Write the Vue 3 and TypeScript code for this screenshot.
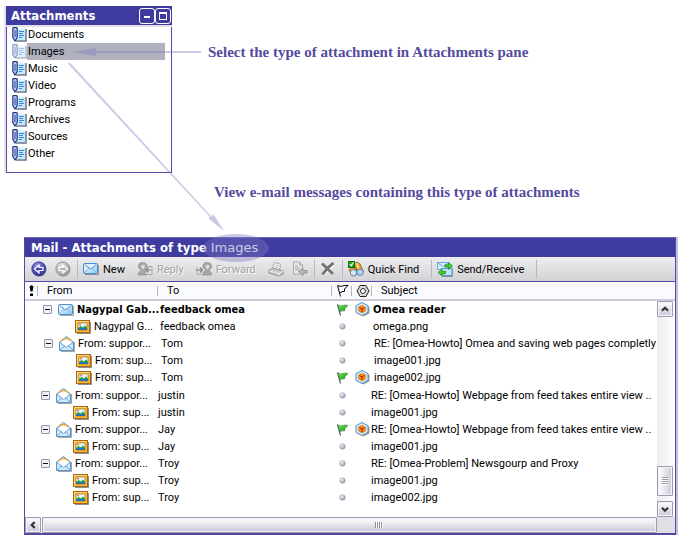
<script setup lang="ts">
import { ref } from 'vue'

interface Row {
  from: string
  to: string
  subject: string
  child?: boolean
  unread?: boolean
  flagged?: boolean
}
interface Thread {
  level: 'near' | 'mid' | 'far'
  rows: Row[]
}

const types = ['Documents', 'Images', 'Music', 'Video', 'Programs', 'Archives', 'Sources', 'Other']
const selected = ref('Images')

const threads: Thread[] = [
  {
    level: 'mid',
    rows: [
      { from: 'Nagypal Gab...', to: 'feedback omea', subject: 'Omea reader', unread: true, flagged: true },
      { from: 'Nagypal G...', to: 'feedback omea', subject: 'omega.png', child: true },
    ],
  },
  {
    level: 'far',
    rows: [
      { from: 'From: suppor...', to: 'Tom', subject: 'RE: [Omea-Howto] Omea and saving web pages completly' },
      { from: 'From: sup...', to: 'Tom', subject: 'image001.jpg', child: true },
      { from: 'From: sup...', to: 'Tom', subject: 'image002.jpg', child: true, flagged: true },
    ],
  },
  {
    level: 'near',
    rows: [
      { from: 'From: suppor...', to: 'justin', subject: 'RE: [Omea-Howto] Webpage from feed takes entire view ..' },
      { from: 'From: sup...', to: 'justin', subject: 'image001.jpg', child: true },
    ],
  },
  {
    level: 'near',
    rows: [
      { from: 'From: suppor...', to: 'Jay', subject: 'RE: [Omea-Howto] Webpage from feed takes entire view ..', flagged: true },
      { from: 'From: sup...', to: 'Jay', subject: 'image001.jpg', child: true },
    ],
  },
  {
    level: 'near',
    rows: [
      { from: 'From: suppor...', to: 'Troy', subject: 'RE: [Omea-Problem] Newsgourp and Proxy' },
      { from: 'From: sup...', to: 'Troy', subject: 'image001.jpg', child: true },
      { from: 'From: sup...', to: 'Troy', subject: 'image002.jpg', child: true },
    ],
  },
]
</script>

<template>
  <main class="page">
    <svg class="sprite" aria-hidden="true">
      <defs>
        <linearGradient id="gBlue" x1="0" y1="0" x2="1" y2="1">
          <stop offset="0" stop-color="#ffffff" /><stop offset="1" stop-color="#8cc8f2" />
        </linearGradient>
        <radialGradient id="gNav" cx="0.4" cy="0.3" r="0.8">
          <stop offset="0" stop-color="#a3a0e8" /><stop offset="0.6" stop-color="#4a45b4" /><stop offset="1" stop-color="#2b2683" />
        </radialGradient>
        <radialGradient id="gNavOff" cx="0.4" cy="0.3" r="0.8">
          <stop offset="0" stop-color="#e4e4e4" /><stop offset="0.6" stop-color="#b4b4b4" /><stop offset="1" stop-color="#8c8c8c" />
        </radialGradient>
        <radialGradient id="gDot" cx="0.35" cy="0.3" r="0.8">
          <stop offset="0" stop-color="#f2f2f8" /><stop offset="1" stop-color="#8d8da4" />
        </radialGradient>
        <linearGradient id="gFlag" x1="0" y1="0" x2="1" y2="1">
          <stop offset="0" stop-color="#7dea5c" /><stop offset="1" stop-color="#0c8a12" />
        </linearGradient>
      </defs>
      <symbol id="doc" viewBox="0 0 15 15">
        <path d="M4 14h10V2" fill="none" stroke="#66758c" stroke-width="1.500" />
        <rect x="3" y="1" width="10" height="12" fill="#c6e6fb" />
        <path d="M3 1h10v2H3z" fill="#e6f5ff" />
        <path d="M7 4.500h5M7 6.500h4M7 8.500h5M7 10.500h3" stroke="#2f8bdc" />
        <path d="M.8 1v9.500L3 14l2.200-3.500V1Q3-.3.8 1z" fill="#b9c9f2" stroke="#1d2f7e" stroke-width="1.100" />
        <path d="M3 3v7" stroke="#33489c" />
      </symbol>
      <symbol id="mail" viewBox="0 0 16 14">
        <path d="M2 12.500h13.500V3" fill="none" stroke="#000" opacity=".35" />
        <rect x=".5" y="1.500" width="14" height="10" rx="1" fill="url(#gBlue)" stroke="#4e8fca" />
        <path d="M1 11l5-4.500M14 11L9 6.500" stroke="#8dbce4" />
        <path d="M1.500 2.500l6 4.500 6-4.500" fill="#e6f5ff" stroke="#4e8fca" />
      </symbol>
      <symbol id="opened" viewBox="0 0 16 16">
        <path d="M2 15.500h13.500V6" fill="none" stroke="#000" opacity=".35" />
        <path d="M.5 6L7.500.5l7 5.500v8.500H.5z" fill="#cfe9fc" stroke="#5b93c8" />
        <path d="M3 8V4.500Q7.500 1 12 4.500V8l-4.500 3z" fill="#fff" />
        <path d="M2.500 5Q7.500 0 12.500 5" fill="none" stroke="#e6a63c" stroke-width="1.500" />
        <path d="M1 6.500l6.500 5 6.500-5M1 14l5-4.500M14 14l-5-4.500" fill="none" stroke="#6ea8da" />
      </symbol>
      <symbol id="picture" viewBox="0 0 16 14">
        <path d="M2 13.500h13.500V2" fill="none" stroke="#333" opacity=".55" />
        <rect x=".5" y=".5" width="14" height="12" fill="#f6b82e" stroke="#a9651a" />
        <path d="M1.500 1.500h12M1.500 1.500v10" stroke="#ffe68a" stroke-dasharray="2 1" />
        <rect x="3" y="3" width="9" height="7" fill="#e4f6ff" stroke="#8a5a20" stroke-width=".5" />
        <path d="M3 8l2.500-2L8 7.500 10 5.500l2 2V9H3z" fill="#22a04a" />
        <path d="M3 8.500h9V10H3z" fill="#2468d0" />
        <circle cx="5" cy="4.500" r="1" fill="#f06030" />
      </symbol>
      <symbol id="flag" viewBox="0 0 13 13">
        <path d="M1.500 1.500l3 11" stroke="#555b66" stroke-width="1.200" />
        <path d="M2 2q3 1.500 5 .5t5 0L9 5.500 8.500 8q-2.500-1-4.500 1z" fill="url(#gFlag)" stroke="#23942a" stroke-width=".6" />
      </symbol>
      <symbol id="flagOutline" viewBox="0 0 13 13">
        <path d="M1.500 1.500l3 11M1.500 1.500q3 1.500 5 .5t5.500-.5L8.500 5v2.500q-2.500-.5-5 1.500" fill="none" stroke="#000" />
      </symbol>
      <symbol id="nut" viewBox="0 0 14 14">
        <path d="M4 1.500h6L13 7l-3 5.500H4L1 7z" fill="#fff" stroke="#222" />
        <circle cx="7" cy="7" r="2.500" fill="none" stroke="#222" />
        <circle cx="7" cy="7" r="4.300" fill="none" stroke="#888" stroke-width=".7" />
      </symbol>
      <symbol id="attach" viewBox="0 0 15 15">
        <path d="M7.500 1.500l6 3v6.500l-6 3-5-2.500z" fill="#444" opacity=".5" transform="translate(1 .5)" />
        <path d="M7 .5l6 3.200v6.600l-6 3.200-6-3.200V3.700z" fill="#dff1fe" stroke="#3c8fd4" />
        <path d="M7 3l3.800 2v4L7 11.200 3.200 9V5z" fill="#f28a1c" stroke="#f08a30" stroke-width=".6" />
        <path d="M4.500 5.500L7 7v3M7 7l2.500-1.500" fill="none" stroke="#8c2a08" />
      </symbol>
      <symbol id="dot" viewBox="0 0 7 7">
        <circle cx="3.500" cy="3.500" r="2.800" fill="url(#gDot)" stroke="#9797ac" stroke-width=".5" />
      </symbol>
      <symbol id="navBack" viewBox="0 0 16 16">
        <circle cx="8.500" cy="8.700" r="7" fill="#000" opacity=".3" />
        <circle cx="7.800" cy="7.800" r="7" fill="url(#gNav)" stroke="#353090" stroke-width=".8" />
        <path d="M12 6.500H8V4L3.500 8 8 12V9.500h4z" fill="#4d48b6" stroke="#fff" stroke-width="1.200" />
      </symbol>
      <symbol id="navForward" viewBox="0 0 16 16">
        <circle cx="8.500" cy="8.700" r="7" fill="#000" opacity=".2" />
        <circle cx="7.800" cy="7.800" r="7" fill="url(#gNavOff)" stroke="#8b8b8b" stroke-width=".8" />
        <path d="M4 6.500h4V4l4.500 4L8 12V9.500H4z" fill="#b4b4b4" stroke="#fff" stroke-width="1.200" />
      </symbol>
      <symbol id="reply" viewBox="0 0 16 14">
        <path d="M1 13q0-3 3-4V7.500Q1 6.500 1.500 3.500T5.500.5q4 0 4.500 3T8 7.500V9q2 1 2 4z" fill="#a6a6a6" stroke="#8c8c8c" stroke-width=".7" />
        <path d="M4 3.500q2-1.500 4 0L7.500 6 6 7.500 4.500 6z" fill="#dcdcdc" />
        <path d="M9.500 4.500h5.500v8H9" fill="#e4e4e4" stroke="#a6a6a6" />
        <path d="M14 8H9.500M11.500 5.500L9 8l2.500 2.500" fill="none" stroke="#808080" stroke-width="1.200" />
      </symbol>
      <symbol id="forward" viewBox="0 0 16 14">
        <path d="M6.500 13q0-3 3-4V7.500Q6.500 6.500 7 3.500T11 .5q4 0 4.500 3T13.500 7.500V9q2 1 2 4z" fill="#a6a6a6" stroke="#8c8c8c" stroke-width=".7" />
        <path d="M9.500 3.500q2-1.500 4 0L13 6l-1.500 1.500L10 6z" fill="#dcdcdc" />
        <path d="M1 5v7.500h6" fill="none" stroke="#b0b0b0" />
        <path d="M0 8h6M4 5.500L6.500 8 4 10.500" fill="none" stroke="#808080" stroke-width="1.200" />
      </symbol>
      <symbol id="print" viewBox="0 0 16 15">
        <path d="M4.500 7l2-6.200 6 2L11.500 9z" fill="#f4f4f4" stroke="#aaaaaa" />
        <path d="M7.500 3.500l3.500 1M7 5.500l3.500 1" stroke="#b8b8b8" />
        <path d="M.8 9l3.700-2.500 10.700 3v3L11 14.500.8 11.500z" fill="#c6c6c6" stroke="#969696" />
        <path d="M1.500 9.500L11 12l4-2.500M11 12v2" fill="none" stroke="#efefef" />
      </symbol>
      <symbol id="convert" viewBox="0 0 16 15">
        <path d="M1.500.5h6l3 3v9h-9z" fill="#e8e8e8" stroke="#aaaaaa" />
        <path d="M7.500.5v3h3M3 4.500h3M3 6.500h5M3 8.500h4" fill="none" stroke="#aaaaaa" />
        <path d="M15 9h-4V6.500L6.500 10l4.500 4v-2.500h4z" fill="#bababa" stroke="#949494" />
      </symbol>
      <symbol id="remove" viewBox="0 0 16 14">
        <path d="M3 3l10 9.500M13.500 2.500L3.500 13" stroke="#fff" stroke-width="3" opacity=".8" />
        <path d="M2 1.500L13 12M13.500 1Q7 5.500 2.500 12.500" fill="none" stroke="#747474" stroke-width="2.800" />
      </symbol>
      <symbol id="find" viewBox="0 0 16 16">
        <path d="M6 3l3-2 3 2 3.500 8-4 3zM1 9l3-3 5 2v5l-4 2z" fill="#f0a230" stroke="#87511a" stroke-width=".8" />
        <path d="M8.500 2l2.500 8" stroke="#ffe08a" stroke-width="1.500" />
        <circle cx="5.500" cy="11.800" r="3.200" fill="#cdeafc" stroke="#6b7f98" />
        <circle cx="12" cy="11.200" r="3.200" fill="#a9d8f6" stroke="#6b7f98" />
        <rect x=".5" y=".5" width="6" height="6" fill="#18a01c" stroke="#0d7412" />
        <path d="M1.800 3l1.400 1.800L5.500 1.500" fill="none" stroke="#fff" stroke-width="1.200" />
      </symbol>
      <symbol id="sync" viewBox="0 0 16 16">
        <path d="M5 15.500h10.500V8" fill="none" stroke="#000" opacity=".35" />
        <rect x=".5" y="1.500" width="11" height="7" fill="#d5ecfc" stroke="#6faedd" />
        <path d="M1 2l5 3.500L11 2" fill="none" stroke="#6faedd" />
        <rect x="4.500" y="7.500" width="10.500" height="7" fill="#bfe2f9" stroke="#5a9bd2" />
        <path d="M8 3.800h3.500V1.500L15.500 5l-4 3.500V6.200H8z" fill="#3fd02e" stroke="#118515" stroke-width=".7" />
        <path d="M8.500 10.300H5V8L1 11.500 5 15v-2.300h3.500z" fill="#3fd02e" stroke="#118515" stroke-width=".7" />
      </symbol>
    </svg>

    <div class="top">
      <section class="pane" aria-label="Attachments">
        <header class="pane-title">
          <h2>Attachments</h2>
          <div class="win-buttons">
            <button type="button" aria-label="Minimize">
              <svg viewBox="0 0 14 14"><path d="M4 8h6" stroke="#fff" stroke-width="2" /></svg>
            </button>
            <button type="button" aria-label="Maximize">
              <svg viewBox="0 0 14 14"><path d="M3 3.500h8M3.500 3v8M10.500 3v8M3 10.500h8" fill="none" stroke="#fff" /><path d="M3 4h8" stroke="#fff" stroke-width="2" /></svg>
            </button>
          </div>
        </header>
        <ul class="types">
          <li v-for="t in types" :key="t">
            <button type="button" :class="['type', { selected: t === selected }]" @click="selected = t">
              <svg class="doc"><use href="#doc" /></svg>
              <span>{{ t }}</span>
            </button>
          </li>
        </ul>
      </section>
      <p class="note">Select the type of attachment in Attachments pane</p>
    </div>
    <p class="note note-view">View e-mail messages containing this type of attachments</p>

    <section class="mail" aria-label="Mail">
      <h2 class="mail-title">Mail - Attachments of type <span>Images</span></h2>

      <div class="toolbar" role="toolbar">
        <div class="group tight">
          <button type="button" aria-label="Back"><svg class="ico"><use href="#navBack" /></svg></button>
          <button type="button" aria-label="Next" disabled><svg class="ico"><use href="#navForward" /></svg></button>
        </div>
        <i class="sep"></i>
        <div class="group">
          <button type="button"><svg class="ico"><use href="#mail" /></svg>New</button>
          <button type="button" disabled><svg class="ico"><use href="#reply" /></svg>Reply</button>
          <button type="button" disabled><svg class="ico"><use href="#forward" /></svg>Forward</button>
          <div class="group tight">
            <button type="button" aria-label="Print" disabled><svg class="ico"><use href="#print" /></svg></button>
            <button type="button" aria-label="Convert" disabled><svg class="ico"><use href="#convert" /></svg></button>
          </div>
        </div>
        <i class="sep"></i>
        <button type="button" aria-label="Delete"><svg class="ico"><use href="#remove" /></svg></button>
        <i class="sep"></i>
        <button type="button"><svg class="ico"><use href="#find" /></svg>Quick Find</button>
        <i class="sep wide"></i>
        <button type="button"><svg class="ico"><use href="#sync" /></svg>Send/Receive</button>
        <i class="sep wide"></i>
      </div>

      <div class="body">
        <div class="list">
          <table>
            <colgroup>
              <col class="c-mark" /><col class="c-from" /><col class="c-to" /><col class="c-icon" /><col class="c-icon" /><col />
            </colgroup>
            <thead>
              <tr>
                <th class="mark" aria-label="Importance">
                  <svg viewBox="0 0 7 11"><path d="M3.500 0L5.500 1.500 4.500 6.500h-2L1.500 1.500zM2 8.500h3V11H2z" /></svg>
                </th>
                <th>From</th>
                <th>To</th>
                <th class="pic" aria-label="Flag"><svg class="i13"><use href="#flagOutline" /></svg></th>
                <th class="pic" aria-label="Attachment"><svg class="i14"><use href="#nut" /></svg></th>
                <th>Subject</th>
              </tr>
            </thead>
            <tbody v-for="(thread, i) in threads" :key="i" :class="thread.level">
              <tr v-for="(row, j) in thread.rows" :key="j" :class="{ unread: row.unread }">
                <td></td>
                <td>
                  <div :class="['cell', { child: row.child }]">
                    <button v-if="!row.child" type="button" class="toggle" aria-label="Collapse"></button>
                    <svg v-if="row.child" class="pict"><use href="#picture" /></svg>
                    <svg v-else-if="row.unread" class="pict"><use href="#mail" /></svg>
                    <svg v-else class="env"><use href="#opened" /></svg>
                    <span>{{ row.from }}</span>
                  </div>
                </td>
                <td class="to">{{ row.to }}</td>
                <td class="pic">
                  <svg v-if="row.flagged" class="i13"><use href="#flag" /></svg>
                  <svg v-else class="dot"><use href="#dot" /></svg>
                </td>
                <td class="pic"><svg v-if="row.flagged" class="i15"><use href="#attach" /></svg></td>
                <td class="subject">{{ row.subject }}</td>
              </tr>
            </tbody>
          </table>
        </div>

        <div class="vside">
          <div class="cap"></div>
          <div class="vscroll">
            <button type="button" class="bar" aria-label="Scroll up">
              <svg viewBox="0 0 16 16"><path d="M4.500 10L8 6.500l3.500 3.500" /></svg>
            </button>
            <div class="track"></div>
            <div class="bar vthumb"><i></i></div>
            <button type="button" class="bar" aria-label="Scroll down">
              <svg viewBox="0 0 16 16"><path d="M4.500 6.500L8 10l3.500-3.500" /></svg>
            </button>
          </div>
        </div>
      </div>

      <div class="hscroll">
        <button type="button" class="bar" aria-label="Scroll left">
          <svg viewBox="0 0 16 16"><path d="M10 4.500L6.500 8l3.500 3.500" /></svg>
        </button>
        <div class="bar hthumb"><i></i></div>
        <div class="corner"></div>
      </div>
    </section>

    <svg class="callouts" viewBox="0 0 300 270" aria-hidden="true">
      <g fill="#7d76be" fill-opacity=".4">
        <path d="M72 52l24-4v3h105v2H96v3z" />
        <path d="M68 63.700l1.600-1.400 141.600 154 2.400-2L224 231l-15.500-12.500 1.500-1.500z" />
        <ellipse cx="236" cy="248" rx="33" ry="14" />
      </g>
    </svg>
  </main>
</template>

<style>
body {
  background: #fff;
}
</style>

<style scoped>
.page {
  position: relative;
  padding: 6px 9px 11px 6px;
  font: 11px/17px Roboto, "Liberation Sans", sans-serif;
  color: #000;
}
button {
  margin: 0;
  padding: 0;
  border: 0;
  background: none;
  font: inherit;
  color: inherit;
  text-align: left;
}
svg {
  display: block;
  flex: none;
}
h2,
p,
ul {
  margin: 0;
  padding: 0;
}
.sprite {
  position: absolute;
  width: 0;
  height: 0;
}
.callouts {
  position: absolute;
  top: 0;
  left: 0;
  width: 300px;
  height: 270px;
  pointer-events: none;
}
.top {
  display: flex;
  gap: 36px;
}
.note {
  padding-top: 37px;
  font: bold 15px/18px "Liberation Serif", serif;
  color: #544b9d;
}
.note-view {
  padding: 10px 0 36px 208px;
}

.pane {
  width: 166px;
  box-sizing: border-box;
  border: 1px solid #5348a3;
  border-top: 0;
  padding-bottom: 10px;
  box-shadow: -2px 0 0 #e2e2e8;
}
.pane-title {
  display: flex;
  justify-content: space-between;
  align-items: center;
  height: 19px;
  margin: 0 -1px;
  padding: 0 1px 0 5px;
  background: #3f3b9f;
  border-bottom: 2px solid #e2e2e8;
  color: #fff;
}
h2 {
  font: bold 13px/19px "DejaVu Sans Condensed", "DejaVu Sans", sans-serif;
}
.win-buttons {
  display: flex;
}
.win-buttons button {
  width: 16px;
  height: 16px;
  box-sizing: border-box;
  border: 1px solid #fff;
  border-radius: 3px;
}
.win-buttons svg {
  width: 14px;
  height: 14px;
}
.types {
  list-style: none;
}
.types li {
  height: 17px;
}
.types li:first-child {
  height: 16px;
  overflow: hidden;
}
.types li:first-child .type {
  margin-top: -1px;
}
.type {
  display: flex;
  align-items: center;
  width: 100%;
  height: 17px;
  padding: 0 6px 0 5px;
}
.type span {
  flex: 1;
  padding-left: 1px;
  line-height: 17px;
}
.type.selected span {
  background: #b0b2c0;
}
.type.selected .doc {
  opacity: .5;
}
.doc {
  width: 15px;
  height: 15px;
}

.mail {
  margin-left: 18px;
  border: 1px solid #5348a3;
  border-bottom-width: 2px;
  border-top-color: #6f68b8;
  box-shadow: 2px 0 0 #c3c1e0;
}
.mail-title {
  padding-left: 6px;
  background: #3f3b9f;
  color: #fff;
}
.mail-title span {
  font-family: "DejaVu Sans", sans-serif;
  font-weight: normal;
}
.toolbar {
  display: flex;
  align-items: center;
  height: 24px;
  padding-left: 6px;
  border-bottom: 1px solid #5348a3;
  background: linear-gradient(#ededf0, #d3d3d6);
}
.toolbar button {
  display: flex;
  align-items: center;
  gap: 4px;
  white-space: nowrap;
}
.toolbar button:disabled {
  color: #a2a2a2;
  text-shadow: 1px 1px 0 #fff;
}
.group {
  display: flex;
  gap: 12px;
}
.group.tight {
  gap: 8px;
}
.ico {
  width: 16px;
  height: 16px;
}
.sep {
  width: 1px;
  height: 18px;
  margin: 0 5px 0 6px;
  background: #b9b9bf;
}
.sep.wide {
  margin-left: 12px;
}

.body {
  display: flex;
}
.list {
  flex: 1;
  min-width: 0;
  padding-bottom: 11px;
}
table {
  width: 100%;
  table-layout: fixed;
  border-collapse: separate;
  border-spacing: 0;
}
.c-mark {
  width: 12px;
}
.c-from {
  width: 120px;
}
.c-to {
  width: 174px;
}
.c-icon {
  width: 20px;
}
th {
  height: 17px;
  padding: 0 0 0 10px;
  border-bottom: 2px solid #ccccd9;
  background: linear-gradient(#b4b4bc, #b4b4bc) left center / 1px 10px no-repeat #fafbff;
  font-weight: normal;
  text-align: left;
}
th.mark {
  padding: 0 0 0 3px;
  background: #fafbff;
}
.mark svg {
  width: 7px;
  height: 11px;
}
td {
  height: 17px;
  padding: 0;
  white-space: nowrap;
}
.far + .near tr:first-child td {
  padding-top: 1px;
}
.near {
  --shift: 0px;
}
.mid {
  --shift: 2px;
}
.far {
  --shift: 3px;
}
.cell {
  display: flex;
  align-items: center;
  gap: 3px;
  height: 17px;
  padding-left: calc(var(--shift) + 4px);
}
.cell.child {
  padding-left: calc(var(--shift) + 36px);
}
td.to {
  padding-left: calc(var(--shift) + 1px);
}
td.subject {
  padding-left: var(--shift);
  overflow: hidden;
}
.unread {
  font: bold 11px/17px "DejaVu Sans Condensed", "DejaVu Sans", sans-serif;
}
.toggle {
  flex: none;
  width: 9px;
  height: 9px;
  margin-right: 3px;
  box-sizing: border-box;
  border: 1px solid #9494ae;
  border-radius: 1px;
  background: linear-gradient(#111, #111) center / 5px 1px no-repeat #f1f1f6;
}
.pict {
  width: 16px;
  height: 14px;
}
.env {
  width: 16px;
  height: 16px;
}
.pic,
th.pic {
  padding-left: 3px;
}
.pic svg {
  margin: 0 auto;
}
.i13 {
  width: 13px;
  height: 13px;
}
.i14 {
  width: 14px;
  height: 14px;
}
.i15 {
  width: 15px;
  height: 15px;
}
.dot {
  width: 7px;
  height: 7px;
}

.vside {
  display: flex;
  flex-direction: column;
  width: 18px;
}
.cap {
  height: 17px;
  border-bottom: 2px solid #ccccd9;
  background: #fafbff;
}
.vscroll {
  flex: 1;
  display: flex;
  flex-direction: column;
  padding-right: 2px;
  background: linear-gradient(90deg, #ececf0, #fff);
}
.track {
  flex: 1;
}
.bar {
  box-sizing: border-box;
  width: 16px;
  height: 16px;
  border: 1px solid #9b9bab;
  border-radius: 1px;
  background: linear-gradient(#ffffff, #c9c9d9);
  box-shadow: inset 0 0 0 1px #f4f4f8;
}
.bar svg {
  width: 14px;
  height: 14px;
  fill: none;
  stroke: #333;
  stroke-width: 2.500;
}
.vthumb {
  display: flex;
  align-items: center;
  justify-content: center;
  height: 30px;
  margin-bottom: 5px;
  background: linear-gradient(90deg, #ffffff, #cacad9);
}
.vthumb i {
  width: 6px;
  height: 8px;
  background: repeating-linear-gradient(#9a9aa6 0 1px, #fff 1px 2px);
}
.hscroll {
  display: flex;
  height: 16px;
}
.hthumb {
  flex: 1;
  display: flex;
  align-items: center;
  justify-content: center;
  margin-left: 1px;
  padding-left: 58px;
}
.hthumb i {
  width: 8px;
  height: 6px;
  background: repeating-linear-gradient(90deg, #8d8d9a 0 1px, #fff 1px 2px);
}
.corner {
  width: 18px;
  background: #e0dfe6;
}
</style>
